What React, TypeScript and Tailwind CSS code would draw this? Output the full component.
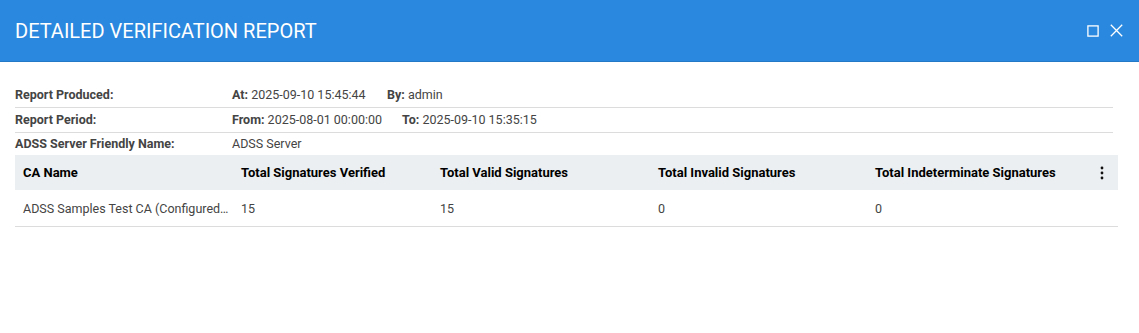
export default function App() {
  const cols = [
    'CA Name',
    'Total Signatures Verified',
    'Total Valid Signatures',
    'Total Invalid Signatures',
    'Total Indeterminate Signatures',
  ];
  const row = ['ADSS Samples Test CA (Configured Local CA)', '15', '15', '0', '0'];

  return (
    <div className="w-[1139px] h-[333px] bg-white font-['Roboto',sans-serif] text-[12.5px] text-[#444]">
      <div className="h-[62px] bg-[#2a88de] border-b border-[#2479c7] flex items-center justify-between pl-[15px] pr-[16px]">
        <h1 className="text-[20px] text-white pt-[1px]">DETAILED VERIFICATION REPORT</h1>
        <div className="flex items-center gap-[11px] text-white">
          <svg width="12" height="12" viewBox="0 0 12 12" fill="none" stroke="currentColor" strokeWidth="1.3">
            <rect x="0.9" y="0.9" width="10.2" height="10.2" />
          </svg>
          <svg width="13" height="13" viewBox="0 0 13 13" fill="none" stroke="currentColor" strokeWidth="1.3">
            <path d="M0.8 0.8 L12.2 12.2 M12.2 0.8 L0.8 12.2" />
          </svg>
        </div>
      </div>

      <div className="px-[15px] pt-[21px]">
        <div className="w-[1098px]">
          <div className="flex items-center h-[25px] border-b border-[#dcdcdc]">
            <div className="w-[217px] font-bold">Report Produced:</div>
            <div className="w-[155px]"><span className="font-bold">At:</span> 2025-09-10 15:45:44</div>
            <div><span className="font-bold">By:</span> admin</div>
          </div>
          <div className="flex items-center h-[25px] border-b border-[#dcdcdc]">
            <div className="w-[217px] font-bold">Report Period:</div>
            <div className="w-[170px]"><span className="font-bold">From:</span> 2025-08-01 00:00:00</div>
            <div><span className="font-bold">To:</span> 2025-09-10 15:35:15</div>
          </div>
          <div className="flex items-center h-[22px]">
            <div className="w-[217px] font-bold">ADSS Server Friendly Name:</div>
            <div>ADSS Server</div>
          </div>
        </div>

        <div className="w-[1103px]">
          <div className="grid grid-cols-[218px_199px_218px_217px_218px_33px] h-[35px] bg-[#eceff1] items-center text-black text-[13px] font-bold">
            {cols.map((c) => (
              <div key={c} className="px-[8px] truncate">{c}</div>
            ))}
            <div className="flex justify-center">
              <svg width="4" height="14" viewBox="0 0 4 14" fill="#111">
                <circle cx="2" cy="2" r="1.4" />
                <circle cx="2" cy="7" r="1.4" />
                <circle cx="2" cy="12" r="1.4" />
              </svg>
            </div>
          </div>
          <div className="grid grid-cols-[218px_199px_218px_217px_218px_33px] h-[37px] items-center border-b border-[#dcdcdc] pt-[3px]">
            {row.map((v, i) => (
              <div key={i} className={i === 0 ? 'pl-[8px] pr-[3px] truncate' : 'px-[8px] truncate'}>{v}</div>
            ))}
            <div />
          </div>
        </div>
      </div>
    </div>
  );
}
